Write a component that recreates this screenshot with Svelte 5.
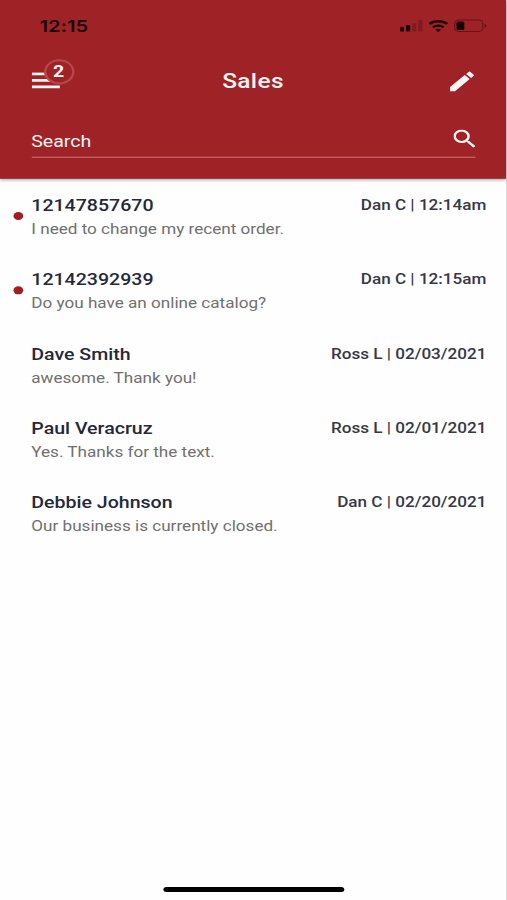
<script lang="ts">
	type Conversation = {
		name: string;
		preview: string;
		agent: string;
		time: string;
		unread: boolean;
	};

	const title = 'Sales';
	const unreadCount = 2;

	const conversations: Conversation[] = [
		{ name: '12147857670', preview: 'I need to change my recent order.', agent: 'Dan C', time: '12:14am', unread: true },
		{ name: '12142392939', preview: 'Do you have an online catalog?', agent: 'Dan C', time: '12:15am', unread: true },
		{ name: 'Dave Smith', preview: 'awesome. Thank you!', agent: 'Ross L', time: '02/03/2021', unread: false },
		{ name: 'Paul Veracruz', preview: 'Yes. Thanks for the text.', agent: 'Ross L', time: '02/01/2021', unread: false },
		{ name: 'Debbie Johnson', preview: 'Our business is currently closed.', agent: 'Dan C', time: '02/20/2021', unread: false }
	];
</script>

<div class="viewport">
	<div class="phone">
		<header>
			<div class="status-bar">
				<span class="clock">12:15</span>
				<svg class="status-icons" width="72" height="14" viewBox="0 0 72 14">
					<rect x="0.4" y="8" width="3.2" height="4.4" rx="0.8" />
					<rect x="5.2" y="6" width="3.4" height="6.4" rx="0.8" />
					<rect x="10.2" y="3.8" width="3.4" height="8.6" rx="0.8" opacity="0.22" />
					<rect x="15.2" y="1" width="3.4" height="11.4" rx="0.8" opacity="0.22" />
					<g fill="none" stroke="#170304" stroke-width="2.3">
						<path d="M24.4 4.8a10.6 10.6 0 0 1 14.4 0" />
						<path d="M27.3 8.3a6.3 6.3 0 0 1 8.6 0" />
					</g>
					<path d="M31.6 12.9l-2.2-2.3a3.2 3.2 0 0 1 4.4 0z" />
					<rect x="45" y="1" width="23" height="11.3" rx="3.2" fill="none" stroke="#170304" opacity="0.42" />
					<rect x="46.5" y="2.4" width="6.4" height="8.5" rx="1.6" />
					<path d="M69.6 4.8c1.8.6 1.8 3.2 0 3.8z" opacity="0.5" />
				</svg>
			</div>

			<div class="toolbar">
				<button class="menu" aria-label="Menu">
					<svg width="23.5" height="17" viewBox="0 0 24 17" preserveAspectRatio="none">
						<path d="M0 0.2h24v2.6H0zM0 6.7h24v2.6H0zM0 13.2h24v2.6H0z" />
					</svg>
					<span class="badge">{unreadCount}</span>
				</button>
				<h1>{title}</h1>
				<button class="compose" aria-label="New message">
					<svg width="26" height="26" viewBox="0 0 24 24">
						<path d="M3 17.25V21h3.75L17.81 9.94l-3.75-3.75L3 17.25zM20.71 7.04a1 1 0 0 0 0-1.41l-2.34-2.34a1 1 0 0 0-1.41 0l-1.83 1.83 3.75 3.75 1.83-1.83z" />
					</svg>
				</button>
			</div>

			<div class="search">
				<span>Search</span>
				<svg width="18" height="18" viewBox="3 3 17.5 17.5">
					<path d="M15.5 14h-.79l-.28-.27A6.47 6.47 0 0 0 16 9.5 6.5 6.5 0 1 0 9.5 16c1.61 0 3.09-.59 4.23-1.57l.27.28v.79l5 4.99L20.49 19l-4.99-5zm-6 0C7.01 14 5 11.99 5 9.5S7.01 5 9.5 5 14 7.01 14 9.5 11.99 14 9.5 14z" />
				</svg>
			</div>
		</header>

		<ul>
			{#each conversations as chat}
				<li>
					<span class="dot" class:unread={chat.unread}></span>
					<div class="body">
						<div class="top">
							<span class="name">{chat.name}</span>
							<span class="meta">{chat.agent} | {chat.time}</span>
						</div>
						<p>{chat.preview}</p>
					</div>
				</li>
			{/each}
		</ul>

		<div class="home-bar"></div>
	</div>
</div>

<style>
	.viewport {
		width: 507px;
		height: 900px;
		overflow: hidden;
		background: #dcdcde;
	}

	/* 414x896 screen, stretched to fill the viewport */
	.phone {
		display: flex;
		flex-direction: column;
		width: 414px;
		height: 896px;
		transform: scale(1.2222, 1.0045);
		transform-origin: 0 0;
		background: #fefefe;
		font-family: Roboto, 'Liberation Sans', sans-serif;
	}

	header {
		box-sizing: border-box;
		flex: none;
		height: 177.5px;
		background: #9f2227;
		color: #fff4f4;
		box-shadow: 0 1px 3px rgba(0, 0, 0, 0.35);
	}

	.status-bar {
		display: flex;
		justify-content: space-between;
		align-items: center;
		height: 52px;
		padding: 0 15px 0 32.5px;
	}

	.clock {
		font-family: Inter, Roboto, sans-serif;
		font-size: 16px;
		font-weight: 600;
		letter-spacing: 0.2px;
		color: #170304;
	}

	.status-icons {
		fill: #170304;
	}

	.toolbar {
		display: flex;
		align-items: center;
		justify-content: space-between;
		height: 57px;
		padding: 0 23px 0 25.5px;
	}

	button {
		display: flex;
		padding: 0;
		border: none;
		background: none;
		color: inherit;
		font-family: inherit;
	}

	svg {
		fill: currentColor;
	}

	.menu {
		position: relative;
	}

	.badge {
		position: absolute;
		left: 10px;
		top: -13px;
		box-sizing: border-box;
		width: 25px;
		height: 25px;
		border: 2px solid #b8474c;
		border-radius: 50%;
		background: #9f2227;
		font-size: 16px;
		font-weight: 700;
		line-height: 22px;
		text-align: center;
	}

	.compose {
		margin-top: 1px;
	}

	h1 {
		margin: 1px 0 0;
		font-size: 20px;
		font-weight: 500;
		letter-spacing: 0.3px;
	}

	.search {
		display: flex;
		align-items: center;
		justify-content: space-between;
		height: 32px;
		margin: 15px 25.5px 0 25.5px;
		border-bottom: 1px solid #c9787b;
		font-size: 16px;
	}

	.search svg {
		margin-bottom: 5px;
	}

	ul {
		flex: 1;
		margin: 0;
		padding: 16.5px 0 0;
		list-style: none;
	}

	li {
		display: flex;
		height: 74px;
		padding: 0 16px 0 10.6px;
	}

	.dot {
		width: 8px;
		height: 8px;
		margin: 16.5px 7px 0 0;
		border-radius: 50%;
	}

	.unread {
		background: #a31c22;
	}

	.body {
		flex: 1;
	}

	.top {
		display: flex;
		justify-content: space-between;
		line-height: 21px;
	}

	.name {
		font-size: 16px;
		font-weight: 500;
		color: #252839;
	}

	.meta {
		font-size: 14px;
		font-weight: 500;
		line-height: 20px;
		color: #363846;
	}

	p {
		margin: 3px 0 0;
		font-size: 14px;
		line-height: 20px;
		color: #707070;
	}

	.home-bar {
		flex: none;
		width: 148px;
		height: 5px;
		margin: 0 auto 8px;
		border-radius: 3px;
		background: #000;
		translate: 0.7px 0;
	}
</style>
